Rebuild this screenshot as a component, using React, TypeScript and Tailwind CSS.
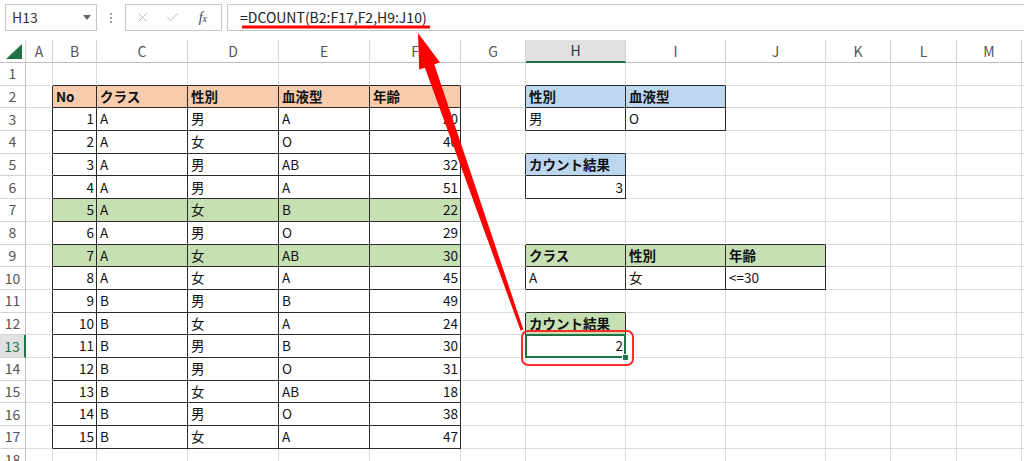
import { X, Check } from "lucide-react";

const COLS = ["A", "B", "C", "D", "E", "F", "G", "H", "I", "J", "K", "L", "M", "N"];
const ROWS = Array.from({ length: 18 }, (_, i) => i + 1);

const people: [number, string, string, string, number][] = [
  [1, "A", "男", "A", 20],
  [2, "A", "女", "O", 40],
  [3, "A", "男", "AB", 32],
  [4, "A", "男", "A", 51],
  [5, "A", "女", "B", 22],
  [6, "A", "男", "O", 29],
  [7, "A", "女", "AB", 30],
  [8, "A", "女", "A", 45],
  [9, "B", "男", "B", 49],
  [10, "B", "女", "A", 24],
  [11, "B", "男", "B", 30],
  [12, "B", "男", "O", 31],
  [13, "B", "女", "AB", 18],
  [14, "B", "男", "O", 38],
  [15, "B", "女", "A", 47],
];

const values: Record<string, string> = {
  B2: "No", C2: "クラス", D2: "性別", E2: "血液型", F2: "年齢",
  H2: "性別", I2: "血液型", H3: "男", I3: "O",
  H5: "カウント結果", H6: "3",
  H9: "クラス", I9: "性別", J9: "年齢",
  H10: "A", I10: "女", J10: "<=30",
  H12: "カウント結果", H13: "2",
};
people.forEach(([no, cls, sex, blood, age], i) => {
  const r = i + 3;
  values[`B${r}`] = String(no);
  values[`C${r}`] = cls;
  values[`D${r}`] = sex;
  values[`E${r}`] = blood;
  values[`F${r}`] = String(age);
});

// [c1, r1, c2, r2] with A = 0
const TABLES = [
  [1, 2, 5, 17],
  [7, 2, 8, 3],
  [7, 5, 7, 6],
  [7, 9, 9, 10],
  [7, 12, 7, 13],
];
const inTable = (c: number, r: number) =>
  TABLES.some(([c1, r1, c2, r2]) => c >= c1 && c <= c2 && r >= r1 && r <= r2);

function fillOf(c: number, r: number) {
  const main = c >= 1 && c <= 5;
  if (main && r === 2) return "bg-[#f8cbad]";
  if (main && (r === 7 || r === 9)) return "bg-[#c6e0b4]";
  if ((r === 2 && (c === 7 || c === 8)) || (r === 5 && c === 7)) return "bg-[#bdd7ee]";
  if ((r === 9 && c >= 7 && c <= 9) || (r === 12 && c === 7)) return "bg-[#c6e0b4]";
  return "bg-white";
}

const isBold = (c: number, r: number) =>
  (r === 2 && ((c >= 1 && c <= 5) || c === 7 || c === 8)) ||
  (r === 5 && c === 7) ||
  (r === 9 && c >= 7 && c <= 9) ||
  (r === 12 && c === 7);

function Cell({ c, r }: { c: number; r: number }) {
  const key = `${COLS[c]}${r}`;
  const v = values[key];
  const rBlack = inTable(c, r) || inTable(c + 1, r);
  const bBlack = inTable(c, r) || inTable(c, r + 1);
  const num = v !== undefined && /^\d+$/.test(v);
  const selected = key === "H13";
  return (
    <div
      className={`relative flex items-center border-r border-b px-[3px] whitespace-nowrap text-[13.5px] leading-none text-[#111] ${fillOf(c, r)} ${
        rBlack ? "border-r-[#2b2b2b]" : "border-r-[#dcdcdc]"
      } ${bBlack ? "border-b-[#2b2b2b]" : "border-b-[#dcdcdc]"} ${num ? "justify-end pr-[2px]" : ""} ${
        isBold(c, r) ? "font-bold" : ""
      }`}
    >
      {v}
      {selected && (
        <>
          <div className="absolute -left-px -top-px -right-px -bottom-px z-10 border-2 border-[#217346]" />
          <div className="absolute -right-[4px] -bottom-[4px] z-10 h-[7px] w-[7px] border border-white bg-[#217346]" />
        </>
      )}
    </div>
  );
}

export default function App() {
  return (
    <div className="relative h-[461px] w-[1024px] overflow-hidden bg-white font-['Noto_Sans_CJK_JP','Noto_Sans',sans-serif] text-[#222]">
      {/* formula bar */}
      <div className="flex h-[40px] items-start pt-[4px]">
        <div className="ml-[5px] flex h-[27px] w-[92px] items-center justify-between border border-[#c8c8c8] pl-[6px] pr-[5px]">
          <span className="text-[14px] text-[#333]">H13</span>
          <svg width="8" height="5" viewBox="0 0 8 5">
            <path d="M0 0 L8 0 L4 5 Z" fill="#666" />
          </svg>
        </div>
        <div className="flex h-[27px] w-[28px] flex-col items-center justify-center gap-[2px]">
          <span className="h-[2px] w-[2px] bg-[#a0a0a0]" />
          <span className="h-[2px] w-[2px] bg-[#a0a0a0]" />
          <span className="h-[2px] w-[2px] bg-[#a0a0a0]" />
        </div>
        <div className="flex h-[27px] w-[97px] items-center border border-[#c8c8c8]">
          <div className="flex w-[34px] justify-center">
            <X size={15} strokeWidth={1.5} color="#b5b5b5" />
          </div>
          <div className="flex w-[26px] justify-center">
            <Check size={15} strokeWidth={1.5} color="#b5b5b5" />
          </div>
          <div className="flex w-[37px] justify-center font-['Liberation_Serif',serif] text-[14px] italic text-[#444]">
            f<span className="mt-[4px] text-[10px]">x</span>
          </div>
        </div>
        <div className="ml-[5px] flex h-[27px] flex-1 items-center border-y border-l border-[#c8c8c8] pl-[12px]">
          <span className="text-[14px] text-[#222]">=DCOUNT(B2:F17,F2,H9:J10)</span>
        </div>
      </div>

      {/* sheet */}
      <div className="grid grid-cols-[26px_27px_44px_91px_91px_91px_91px_65px_100px_100px_100px_65px_66px_65px_1fr] grid-rows-[23px_repeat(18,22.7px)]">
        <div className="relative border-r border-b border-r-[#d4d4d4] border-b-[#bdbdbd]">
          <svg className="absolute right-[3px] bottom-[3px]" width="16" height="15" viewBox="0 0 16 15">
            <path d="M16 0 L16 15 L0 15 Z" fill="#217346" />
          </svg>
        </div>
        {COLS.map((col) =>
          col === "H" ? (
            <div
              key={col}
              className="flex items-center justify-center border-r border-b-2 border-r-[#d4d4d4] border-b-[#217346] bg-[#e1e1e1] text-[14px] text-[#333]"
            >
              {col}
            </div>
          ) : (
            <div
              key={col}
              className="flex items-center justify-center overflow-hidden border-r border-b border-r-[#d4d4d4] border-b-[#bdbdbd] text-[14px] text-[#555]"
            >
              {col === "N" ? "" : col}
            </div>
          )
        )}
        {ROWS.map((r) => (
          <div key={r} className="contents">
            {r === 13 ? (
              <div className="flex items-center justify-center border-r-2 border-b border-r-[#217346] border-b-[#d4d4d4] bg-[#e1e1e1] text-[14px] text-[#217346]">
                {r}
              </div>
            ) : (
              <div className="flex items-center justify-center border-r border-b border-r-[#bdbdbd] border-b-[#d4d4d4] text-[14px] text-[#555]">
                {r}
              </div>
            )}
            {COLS.map((_, c) => (
              <Cell key={c} c={c} r={r} />
            ))}
          </div>
        ))}
      </div>

      {/* annotations */}
      <svg className="pointer-events-none absolute left-0 top-0 z-20" width="1024" height="461" viewBox="0 0 1024 461">
        <line x1="242" y1="27" x2="430" y2="27" stroke="#ff0000" strokeWidth="3" />
        <polygon
          points="418,33 440,62.4 434.3,64.3 523.4,329.5 520.6,330.5 424.9,67.7 419.2,69.6"
          fill="#ff0000"
        />
        <rect x="522" y="331" width="111" height="34" rx="6" fill="none" stroke="#ff2a2a" strokeWidth="2" />
      </svg>
    </div>
  );
}
